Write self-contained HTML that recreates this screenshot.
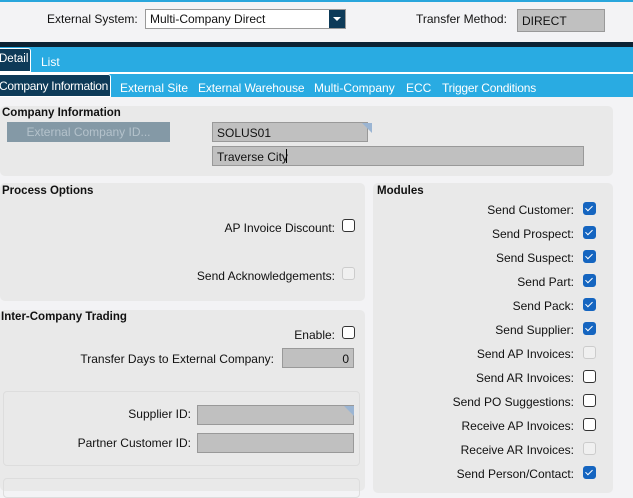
<!DOCTYPE html><html><head><style>
body{margin:0;width:633px;height:491px;overflow:hidden;background:#f3f3f5;font-family:"Liberation Sans",sans-serif;font-size:12px;color:#111;position:relative}
div,span{position:absolute;box-sizing:border-box}
.p{background:#e9e9e9;border-radius:5px}
.h{font-weight:bold;font-size:11.5px}
.l{text-align:right;white-space:nowrap}
.cb{width:13px;height:13px;border:1px solid #333;border-radius:3px;background:#fff}
.cb.d{border-color:#ccc;background:#f0f0f0}
.cb.c{background:#1565c0;border-color:#1565c0}
.cb.c::after{content:"";position:absolute;left:3px;top:1px;width:3px;height:6px;border:solid #fff;border-width:0 1.2px 1.2px 0;transform:rotate(45deg)}
.in{background:#c0c0c0;border:1px solid #999;padding:3px 4px;font-size:12px}
.t{color:#fff;top:0;white-space:nowrap}
</style></head><body>
<div style="left:0;top:0;width:633px;height:2px;background:#29a6dc"></div>
<span style="left:47px;top:12px">External System:</span>
<div style="left:145px;top:9px;width:201px;height:20px;background:#fff;border:1px solid #999;padding:2px 4px;font-size:12px">Multi-Company Direct</div>
<div style="left:329px;top:10px;width:16px;height:18px;background:#0d3a58"><span style="left:4px;top:7px;border:4px solid transparent;border-top:4px solid #fff;border-bottom:0"></span></div>
<span style="left:416px;top:12px">Transfer Method:</span>
<div class="in" style="left:517px;top:9px;width:88px;height:23px;padding-top:4px">DIRECT</div>
<div style="left:0;top:42px;width:633px;height:5px;background:#0b2233"></div>
<div style="left:0;top:47px;width:633px;height:25px;background:#29abe2"></div>
<div style="left:0;top:48px;width:31px;height:24px;background:#0d3a58;border:1px solid #fff;border-left:0;border-radius:0 3px 0 0"><span class="t" style="left:-1px;top:4px;font-size:11.5px">Detail</span></div>
<span style="left:41px;top:55px;color:#fff">List</span>
<div style="left:0;top:72px;width:633px;height:2px;background:#fff"></div>
<div style="left:0;top:74px;width:633px;height:23px;background:#29abe2"></div>
<div style="left:0;top:74px;width:111px;height:23px;background:#0d3a58;border:1px solid #fff;border-left:0;border-radius:0 3px 0 0"><span class="t" style="left:-1px;top:4px;letter-spacing:-0.3px">Company Information</span></div>
<span style="left:120px;top:81px;color:#fff">External Site</span>
<span style="left:198px;top:81px;color:#fff;letter-spacing:-0.1px">External Warehouse</span>
<span style="left:314px;top:81px;color:#fff">Multi-Company</span>
<span style="left:406px;top:81px;color:#fff">ECC</span>
<span style="left:442px;top:81px;color:#fff;letter-spacing:-0.2px">Trigger Conditions</span>

<div class="p" style="left:0;top:106px;width:613px;height:70px"></div>
<span class="h" style="left:2px;top:107px">Company Information</span>
<div style="left:7px;top:122px;width:163px;height:20px;background:#8499a6;color:#b4c2cb;text-align:center;padding-top:3px">External Company ID...</div>
<div class="in" style="left:212px;top:122px;width:156px;height:20px">SOLUS01</div>
<div style="left:362px;top:123px;border:5px solid #9bb5d3;border-bottom-color:transparent;border-left-color:transparent"></div>
<div class="in" style="left:212px;top:146px;width:372px;height:20px">Traverse City</div>
<div style="left:286px;top:149px;width:1px;height:14px;background:#000"></div>

<div class="p" style="left:0;top:183px;width:365px;height:118px"></div>
<span class="h" style="left:2px;top:185px">Process Options</span>
<span class="l" style="right:298px;top:221px">AP Invoice Discount:</span>
<div class="cb" style="left:342px;top:219px"></div>
<span class="l" style="right:298px;top:269px">Send Acknowledgements:</span>
<div class="cb d" style="left:342px;top:267px"></div>

<div class="p" style="left:0;top:310px;width:365px;height:181px"></div>
<span class="h" style="left:1px;top:311px">Inter-Company Trading</span>
<span class="l" style="right:298px;top:328px">Enable:</span>
<div class="cb" style="left:342px;top:326px"></div>
<span class="l" style="right:359px;top:352px">Transfer Days to External Company:</span>
<div class="in" style="left:282px;top:348px;width:72px;height:20px;text-align:right">0</div>
<div style="left:3px;top:391px;width:357px;height:75px;border:1px solid #ddd;border-radius:4px;background:#e9e9e9"></div>
<span class="l" style="right:442px;top:407px">Supplier ID:</span>
<div class="in" style="left:197px;top:405px;width:157px;height:20px"></div>
<div style="left:344px;top:406px;border:5px solid #9bb5d3;border-bottom-color:transparent;border-left-color:transparent"></div>
<span class="l" style="right:442px;top:436px">Partner Customer ID:</span>
<div class="in" style="left:197px;top:433px;width:157px;height:20px"></div>
<div style="left:3px;top:478px;width:357px;height:20px;border:1px solid #ddd;border-radius:4px"></div>

<div class="p" style="left:373px;top:183px;width:240px;height:310px"></div>
<span class="h" style="left:377px;top:185px">Modules</span>
<span class="l" style="right:59px;top:203px">Send Customer:</span><div class="cb c" style="left:583px;top:202px"></div>
<span class="l" style="right:59px;top:227px">Send Prospect:</span><div class="cb c" style="left:583px;top:226px"></div>
<span class="l" style="right:59px;top:251px">Send Suspect:</span><div class="cb c" style="left:583px;top:250px"></div>
<span class="l" style="right:59px;top:275px">Send Part:</span><div class="cb c" style="left:583px;top:274px"></div>
<span class="l" style="right:59px;top:299px">Send Pack:</span><div class="cb c" style="left:583px;top:298px"></div>
<span class="l" style="right:59px;top:323px">Send Supplier:</span><div class="cb c" style="left:583px;top:322px"></div>
<span class="l" style="right:59px;top:347px">Send AP Invoices:</span><div class="cb d" style="left:583px;top:346px"></div>
<span class="l" style="right:59px;top:371px">Send AR Invoices:</span><div class="cb" style="left:583px;top:370px"></div>
<span class="l" style="right:59px;top:395px">Send PO Suggestions:</span><div class="cb" style="left:583px;top:394px"></div>
<span class="l" style="right:59px;top:419px">Receive AP Invoices:</span><div class="cb" style="left:583px;top:418px"></div>
<span class="l" style="right:59px;top:443px">Receive AR Invoices:</span><div class="cb d" style="left:583px;top:442px"></div>
<span class="l" style="right:59px;top:467px">Send Person/Contact:</span><div class="cb c" style="left:583px;top:466px"></div>
</body></html>
